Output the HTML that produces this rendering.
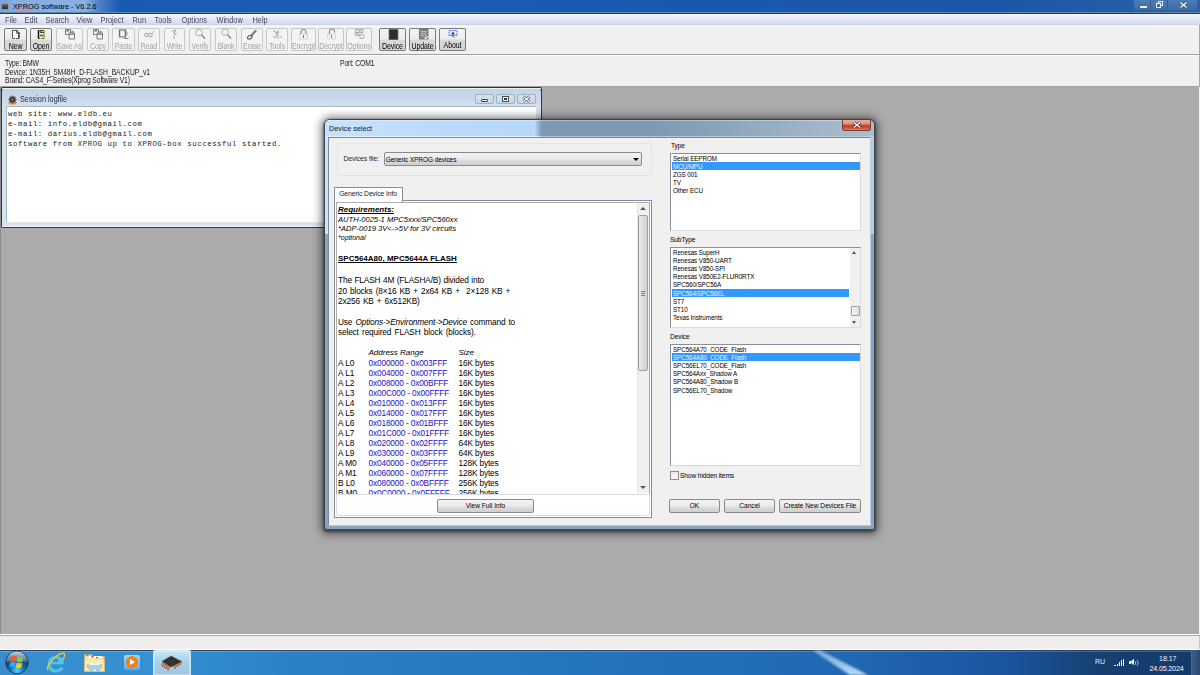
<!DOCTYPE html>
<html><head><meta charset="utf-8">
<style>
*{box-sizing:border-box;margin:0;padding:0}
html,body{width:1200px;height:675px;overflow:hidden;background:#ababab;font-family:"Liberation Sans",sans-serif;position:relative}
.a{position:absolute}
.t{position:absolute;white-space:nowrap;line-height:1}
#title{left:0;top:0;width:1200px;height:14px;background:linear-gradient(90deg,#3f6fb8 0,#1b5ab2 120px,#1b5cb4 400px,#1a58b0 700px,#1c56a8 1000px,#2a62a8 1200px)}
#menubar{left:0;top:14px;width:1200px;height:11px;background:linear-gradient(#f7f9fd 0,#eef1fa 2px,#dfe5f3 6px,#d7def0 9px,#cbd3e6 11px)}
#toolbar{left:0;top:25px;width:1200px;height:62px;background:#f0f0f0}
#status{left:0;top:634px;width:1200px;height:15px;background:#f0eeec;border-top:1px solid #a0a0a0}
#taskbar{left:0;top:650px;width:1200px;height:25px;background:linear-gradient(90deg,#3a8ccc 0,#3592d4 150px,#2c80c4 300px,#2474bd 600px,#2068b3 850px,#1b55a0 1000px,#163f72 1100px,#133a6a 1200px)}
.mi{font-size:7.4px;color:#4a4560;top:16.8px;transform:scaleY(1.2);transform-origin:0 6.3px}
.tb{position:absolute;top:28px;height:23px;border:1px solid #c9c9c9;border-radius:2px;background:#f3f3f3}
.tb.on{border-color:#7a7a7a;background:linear-gradient(#f4f4f4 0,#ececec 10px,#dadada 11px,#d4d4d4 100%)}
.tb .l{position:absolute;left:0;right:0;top:14px;text-align:center;font-size:7px;line-height:1;transform:scaleY(1.2);transform-origin:0 5.9px;color:#a2a2a2;white-space:nowrap;letter-spacing:-0.1px}
.tb.on .l{color:#000}
.tb svg{position:absolute;left:50%;top:1px;margin-left:-6px}
.inf{font-size:6.8px;color:#1a1a1a;letter-spacing:-0.15px;transform:scaleY(1.2);transform-origin:0 5.8px}
.mono{font-family:"Liberation Mono",monospace;font-size:7.3px;letter-spacing:0.6px;color:#1a1a1a}
.ds{font-size:6.6px;color:#000;letter-spacing:-0.1px}
.rt{font-size:8px;color:#000}
.lb{position:absolute;background:#fff;border:1px solid #8a8e96;border-right-color:#dcdcdc;border-bottom-color:#dcdcdc}
.li{position:absolute;left:1px;right:0;height:8.4px;font-size:6.3px;line-height:9px;padding-left:1px;white-space:nowrap;color:#000;letter-spacing:-0.1px}
.li.sel{background:#3399ff;color:#e8f2ff}
.btn{position:absolute;height:14px;border:1px solid #8a8a8a;border-radius:2px;background:linear-gradient(#f3f3f3 0,#ebebeb 6px,#dddddd 7px,#cfcfcf 100%);font-size:6.6px;line-height:12px;text-align:center;color:#000;white-space:nowrap}
.row .c1,.row .c2,.row .c3{position:absolute;white-space:nowrap;line-height:1;font-size:8px}

</style></head><body>
<div id="title" class="a"></div>
<div class="a" style="left:0;top:12px;width:1200px;height:1px;background:#5b86c4"></div>
<div class="a" style="left:0;top:13px;width:1200px;height:1px;background:#27375a"></div>
<div class="a" style="left:0;top:0;width:125px;height:12px;background:linear-gradient(90deg,rgba(140,175,225,.8) 0,rgba(150,185,230,.85) 15px,rgba(155,190,232,.85) 85px,rgba(120,160,215,.5) 100px,rgba(40,90,170,0) 120px);filter:blur(.6px)"></div><div class="a" style="left:14px;top:8px;width:20px;height:4px;background:rgba(240,120,120,.45);filter:blur(1.2px);border-radius:50%"></div>
<div class="a" style="left:1px;top:3px;width:8px;height:7px;background:linear-gradient(#6a6a6a,#2a2a2a);border:1px solid #9a9a9a;border-radius:1px"></div>
<div class="t" style="left:13px;top:3.1px;font-size:7.3px;color:#000">XPROG software - V6.2.6</div>
<div class="a" style="left:1133px;top:0;width:65px;height:11px;border:1px solid #3a5f8e;border-top:0;border-radius:0 0 3px 3px;background:linear-gradient(#4d7cb4,#3d6ba5)"></div>
<div class="a" style="left:1150px;top:0;width:1px;height:11px;background:#3a5f8e"></div>
<div class="a" style="left:1167px;top:0;width:1px;height:11px;background:#3a5f8e"></div>
<div class="a" style="left:1140px;top:5.5px;width:7px;height:2px;background:#eee;box-shadow:0 0 1px #123"></div>
<div class="a" style="left:1158px;top:1px;width:5px;height:5px;border:1px solid #eee"></div>
<div class="a" style="left:1156px;top:3px;width:5px;height:5px;border:1.5px solid #fff;background:#3d6ba5"></div>
<svg class="a" style="left:1179px;top:1px" width="9" height="8" viewBox="0 0 9 8"><path d="M1.5 1.5l6 5M7.5 1.5l-6 5" stroke="#3a4a60" stroke-width="2.6"/><path d="M1.5 1.5l6 5M7.5 1.5l-6 5" stroke="#f4f4f4" stroke-width="1.6"/></svg>
<div id="menubar" class="a"></div>
<div class="t mi" style="left:5px">File</div>
<div class="t mi" style="left:24.5px">Edit</div>
<div class="t mi" style="left:45.5px">Search</div>
<div class="t mi" style="left:76.5px">View</div>
<div class="t mi" style="left:100.5px">Project</div>
<div class="t mi" style="left:132.5px">Run</div>
<div class="t mi" style="left:154.5px">Tools</div>
<div class="t mi" style="left:181.5px">Options</div>
<div class="t mi" style="left:216.5px">Window</div>
<div class="t mi" style="left:252.5px">Help</div>
<div class="a" style="left:0;top:25px;width:1200px;height:1px;background:#c5c9d2"></div>
<div class="a" style="left:1199px;top:25px;width:1px;height:62px;background:#a8a8a8;z-index:2"></div><div class="a" style="left:0;top:26px;width:1198px;height:1px;background:#fafafa;z-index:1"></div>
<div id="toolbar" class="a"></div>
<div class="tb on" style="left:4px;width:23px"><div class="l">New</div></div>
<div class="tb on" style="left:30px;width:22px"><div class="l">Open</div></div>
<div class="tb" style="left:56px;width:27px"><div class="l">Save As</div></div>
<div class="tb" style="left:87px;width:22px"><div class="l">Copy</div></div>
<div class="tb" style="left:112px;width:23px"><div class="l">Paste</div></div>
<div class="tb" style="left:138px;width:22px"><div class="l">Read</div></div>
<div class="tb" style="left:164px;width:21px"><div class="l">Write</div></div>
<div class="tb" style="left:189px;width:22px"><div class="l">Verify</div></div>
<div class="tb" style="left:215px;width:22px"><div class="l">Blank</div></div>
<div class="tb" style="left:241px;width:22px"><div class="l">Erase</div></div>
<div class="tb" style="left:266px;width:22px"><div class="l">Tools</div></div>
<div class="tb" style="left:291px;width:25px"><div class="l">Encrypt</div></div>
<div class="tb" style="left:318px;width:26px"><div class="l">Decrypt</div></div>
<div class="tb" style="left:346px;width:26px"><div class="l">Options</div></div>
<div class="tb on" style="left:379px;width:27px"><div class="l">Device</div></div>
<div class="tb on" style="left:409px;width:27px"><div class="l">Update</div></div>
<div class="tb on" style="left:439px;width:27px"><div class="l" style="top:13px">About</div></div>
<svg class="a" style="left:0;top:28px" width="480" height="14" viewBox="0 0 480 14" shape-rendering="geometricPrecision"><path d="M12.5 2.5h4.5l2 2v6h-6.5z" fill="#fff" stroke="#555" stroke-width="1"/><path d="M17 2.5v2.5h2.3" fill="none" stroke="#000" stroke-width="1.1"/><path d="M19 5v5.3" stroke="#000" stroke-width="1"/><path d="M17.5 4.5l3-3" stroke="#f0f020" stroke-width=".9"/><rect x="10.9" y="0.9" width="1.2" height="1.2" fill="#f0f020"/><rect x="14.9" y="0.9" width="1.2" height="1.2" fill="#f0f020"/><rect x="10.9" y="5.9" width="1.2" height="1.2" fill="#f0f020"/><rect x="19.2" y="5.9" width="1.2" height="1.2" fill="#f0f020"/><rect x="10.9" y="9.699999999999998" width="1.2" height="1.2" fill="#f0f020"/><rect x="14.9" y="10.000000000000002" width="1.2" height="1.2" fill="#f0f020"/><rect x="18.9" y="9.699999999999998" width="1.2" height="1.2" fill="#f0f020"/><path d="M38.5 2.5h5.5v8h-5.5z" fill="#fff" stroke="#555" stroke-width="1"/><path d="M38.5 2.5v8" stroke="#000" stroke-width="1.5"/><path d="M41 2.5v2h2l1-2" fill="none" stroke="#000" stroke-width="1.1"/><path d="M40 6.5h3v2h-3z" fill="#666"/><path d="M42.5 4.5l3-3" stroke="#f0f020" stroke-width=".9"/><rect x="36.9" y="0.9" width="1.2" height="1.2" fill="#f0f020"/><rect x="40.4" y="0.9" width="1.2" height="1.2" fill="#f0f020"/><rect x="36.9" y="5.9" width="1.2" height="1.2" fill="#f0f020"/><rect x="44.4" y="5.9" width="1.2" height="1.2" fill="#f0f020"/><rect x="36.9" y="9.699999999999998" width="1.2" height="1.2" fill="#f0f020"/><rect x="40.4" y="10.000000000000002" width="1.2" height="1.2" fill="#f0f020"/><rect x="44.4" y="9.699999999999998" width="1.2" height="1.2" fill="#f0f020"/><path d="M65.5 1.5h5v5h-5z" fill="#f4f4f4" stroke="#7a7a7a" stroke-width="1"/><path d="M66.5 1.8000000000000007h2.5v2h-2.5z" fill="#8a8a8a"/><path d="M69 5h5.5v6h-5.5z" fill="#f4f4f4" stroke="#7a7a7a" stroke-width="1"/><path d="M65.5 6.5h9" stroke="#8a8a8a" stroke-width="1"/><circle cx="72.5" cy="4" r="1.3" fill="#8a8a8a"/><path d="M93.5 1.5h5v5h-5z" fill="#f4f4f4" stroke="#7a7a7a" stroke-width="1"/><path d="M94.5 1.8000000000000007h2.5v2h-2.5z" fill="#8a8a8a"/><path d="M97 5h5.5v6h-5.5z" fill="#f4f4f4" stroke="#7a7a7a" stroke-width="1"/><path d="M93.5 6.5h9" stroke="#8a8a8a" stroke-width="1"/><circle cx="100.5" cy="4" r="1.3" fill="#8a8a8a"/><path d="M119.5 2h6v7h-6z" fill="#e0e0e0" stroke="#6a6a6a" stroke-width="1.2"/><path d="M121 3.5h3v4h-3z" fill="#fff"/><path d="M125.5 3l2 2.5-2 2.5M124 10.5h4l1-1" fill="none" stroke="#777" stroke-width=".9"/><circle cx="146.5" cy="7" r="1.8" fill="none" stroke="#999" stroke-width=".9"/><circle cx="150.5" cy="7" r="1.8" fill="none" stroke="#999" stroke-width=".9"/><path d="M148.3 7h.5M152 5.5l2.5-3" stroke="#aaa" stroke-width=".8" fill="none"/><path d="M172 3.5l4-1.5-2.5 3 3 1-3 2 1 3" fill="none" stroke="#a0a0a0" stroke-width=".9"/><circle cx="199" cy="4.5" r="3.3" fill="none" stroke="#a8a8a8" stroke-width=".9"/><path d="M201.5 7.0l3.5 3.8" stroke="#8a8a8a" stroke-width="1.3"/><circle cx="225" cy="4.200000000000003" r="3.3" fill="none" stroke="#a8a8a8" stroke-width=".9"/><path d="M227.5 6.700000000000003l3.5 3.8" stroke="#8a8a8a" stroke-width="1.3"/><path d="M251 8l5-5.5" stroke="#6a6a6a" stroke-width="2"/><path d="M252 7l4.5-5" stroke="#aaa" stroke-width=".6"/><path d="M247.5 10.5q0-3 2.5-3t2 1.5-2 2-2.5-.5" fill="none" stroke="#555" stroke-width="1.1"/><path d="M273 2l3 3 3-1M275 3l2 4-2 3M278 2v9M273 8l2 2M280 8l2 2" fill="none" stroke="#a0a0a0" stroke-width=".9"/><path d="M301 6v-2a2.5 2.5 0 0 1 5 0v2" fill="none" stroke="#8a8aa8" stroke-width="1.2"/><path d="M299.5 6h8v5h-8z" fill="#f6f2e4" stroke="#c8c8c8" stroke-width=".6"/><path d="M303 7.5h1v2h-1z" fill="#444"/><path d="M329.5 6v-2.5a2.5 2.5 0 0 1 5 0v1" fill="none" stroke="#8a8aa8" stroke-width="1.2"/><path d="M327.5 6h8v5h-8z" fill="#f6f2e4" stroke="#c8c8c8" stroke-width=".6"/><path d="M331 7.5h1v2h-1z" fill="#444"/><path d="M355.5 1.5h3.5v3h-3.5zM360 1.5h3v3h-3zM355.5 5h3.5v2.5h-3.5z" fill="#e8e8e8" stroke="#999" stroke-width=".8"/><circle cx="362" cy="8.5" r="2.2" fill="none" stroke="#a0a0a0" stroke-width=".9"/><path d="M359.5 10.5l1-1" stroke="#aaa" stroke-width=".8"/><path d="M389 1.5h9v10h-9z" fill="#2c2c2c" stroke="#5a5a5a" stroke-width=".8"/><path d="M388.6 2.5v8M398.4 2.5v8" stroke="#a8c0d8" stroke-width=".8"/><path d="M419.5 1.5h8.5v9.5h-8.5z" fill="#8c8c8c" stroke="#5a5a5a" stroke-width=".8"/><path d="M420.5 3.5h6.5M420.5 5.5h6.5M420.5 7.5h6.5" stroke="#c4c4c4" stroke-width=".7"/><path d="M424.5 9.5l1.3 1.3 2.5-2.8" stroke="#fff" stroke-width="1.1" fill="none"/><path d="M449 2.5h8v5h-8z" fill="none" stroke="#2a6ae0" stroke-width="1" stroke-dasharray="1.6 1"/><path d="M453 3.5l-2 3h4z" fill="#1840b0"/><path d="M452.5 7.5l1.5 2" stroke="#1840b0" stroke-width="1"/></svg>
<div class="a" style="left:0;top:54px;width:1199px;height:1px;background:#a0a0a0"></div>
<div class="a" style="left:0;top:55px;width:1199px;height:1px;background:#fff"></div>
<div class="t inf" style="left:5px;top:60.6px">Type: BMW</div>
<div class="t inf" style="left:5px;top:69.5px;letter-spacing:-0.05px">Device: 1N35H_5M48H_D-FLASH_BACKUP_v1</div>
<div class="t inf" style="left:5px;top:77.9px">Brand: CAS4_F-Series(Xprog Software V1)</div>
<div class="t inf" style="left:340px;top:60.6px">Port: COM1</div>
<div class="a" style="left:0;top:87px;width:1200px;height:547px;background:#ababab"></div>
<div class="a" style="left:0;top:87px;width:1px;height:547px;background:#8a8a8a"></div>
<div class="a" style="left:0;top:86px;width:1200px;height:1px;background:#a2a2a2"></div>
<div class="a" style="left:1px;top:87px;width:541px;height:141px;background:#353535;border-radius:2px"></div>
<div class="a" style="left:2px;top:88px;width:539px;height:139px;border-radius:4px 4px 0 0;background:linear-gradient(#c2d3e6 0,#c9d8ea 10px,#d3e1ef 18px,#d7e4f1 100%)"></div>
<div class="a" style="left:2px;top:88px;width:539px;height:1px;background:#e8f0f8"></div>
<div class="a" style="left:2px;top:226px;width:539px;height:1px;background:#f4f8fc"></div>
<svg class="a" style="left:7px;top:95px" width="11" height="10" viewBox="0 0 11 10"><path d="M1 8l1.5-2 1 2 1-2.5 1 2.5 1-2.5 1 2.5 1-2 1.5 2-2 1.5h-5z" fill="#f09020"/><circle cx="5.5" cy="4.5" r="3" fill="#3a3a3a"/><path d="M5.5 0.5v8M1.5 4.5h8M2.7 1.7l5.6 5.6M8.3 1.7l-5.6 5.6" stroke="#444" stroke-width="1.3"/><circle cx="5.5" cy="4.5" r="1" fill="#777"/></svg>
<div class="t" style="left:20px;top:96px;font-size:7.3px;color:#1e2a3a;transform:scaleY(1.2);transform-origin:0 6.2px">Session logfile</div>
<div class="a" style="left:475px;top:94px;width:19px;height:10px;border:1px solid #9fb0c6;border-radius:2px;background:linear-gradient(#d6e2ee,#c8d6e6)"></div>
<div class="a" style="left:496px;top:94px;width:19px;height:10px;border:1px solid #9fb0c6;border-radius:2px;background:linear-gradient(#d6e2ee,#c8d6e6)"></div>
<div class="a" style="left:517px;top:94px;width:19px;height:10px;border:1px solid #9fb0c6;border-radius:2px;background:linear-gradient(#d6e2ee,#c8d6e6)"></div>
<div class="a" style="left:481px;top:99px;width:7px;height:3px;border:1px solid #444a55;background:#fff;border-radius:1px"></div>
<div class="a" style="left:502px;top:96px;width:7px;height:6px;border:1px solid #444a55;background:#fff"></div>
<div class="a" style="left:504px;top:98px;width:3px;height:2px;background:#333"></div>
<svg class="a" style="left:522px;top:95px" width="9" height="8" viewBox="0 0 9 8"><path d="M1.5 1.5l6 5M7.5 1.5l-6 5" stroke="#404858" stroke-width="2.6"/><path d="M1.5 1.5l6 5M7.5 1.5l-6 5" stroke="#f8f8f8" stroke-width="1.4"/></svg>
<div class="a" style="left:6px;top:106px;width:531px;height:117px;background:#fff;border:1px solid #a9b6c5;border-right-color:#e0e6ee;border-bottom-color:#e0e6ee"></div>
<div class="t mono" style="left:8px;top:110.8px">web site: www.eldb.eu</div>
<div class="t mono" style="left:8px;top:120.8px">e-mail: info.eldb@gmail.com</div>
<div class="t mono" style="left:8px;top:130.8px">e-mail: darius.eldb@gmail.com</div>
<div class="t mono" style="left:8px;top:140.8px">software from XPROG up to XPROG-box successful started.</div>
<div class="a" style="left:324px;top:119px;width:551px;height:411px;border-radius:6px 6px 3px 3px;box-shadow:0 1px 2px 1px rgba(0,0,0,.35),0 1px 9px 3px rgba(0,0,0,.5);background:#88a4c0;overflow:hidden;border:1px solid #3a4658">
<div class="a" style="left:0;top:0;width:216px;height:114px;background:#cfe4f8"></div>
<div class="a" style="left:0;top:0;width:549px;height:17px;background:linear-gradient(90deg,#c8e2fb 0,#b9dafb 120px,#b6d8fb 210px,#8fb0d0 214px,#7e98b1 217px,#7f99b2 330px,#acbfd0 100%)"></div>
<div class="a" style="left:0;top:0;width:549px;height:1px;background:rgba(255,255,255,.35)"></div>
<div class="a" style="left:0;top:16px;width:549px;height:1px;background:linear-gradient(90deg,#e6f2fc 0,#e6f2fc 212px,#aebfd0 217px,#c0cfdc 100%)"></div>
<div class="a" style="left:545px;top:17px;width:4px;height:393px;background:linear-gradient(90deg,#c4d6e8 0,#c4d6e8 1px,#8aa6c2 1px)"></div><div class="a" style="left:545px;top:17px;width:4px;height:97px;background:linear-gradient(90deg,#e0ecf8 0,#e0ecf8 1px,#b8cde2 1px)"></div>
<div class="a" style="left:4px;top:405px;width:542px;height:5px;background:linear-gradient(#c4d6e8 0,#c4d6e8 1px,#88a4c0 1px)"></div>
</div>
<div class="t" style="left:329px;top:124.5px;font-size:7.25px;color:#0e1a2a">Device select</div>
<!-- close button -->
<div class="a" style="left:842px;top:120px;width:29px;height:11px;border:1px solid #7a3a30;border-top:0;border-radius:0 0 3px 3px;background:linear-gradient(#e6b0a4 0,#dc907e 40%,#c2442c 52%,#c84e34 80%,#de8a70 100%)"></div>
<svg class="a" style="left:852px;top:121px" width="10" height="8" viewBox="0 0 10 8"><path d="M2 1.5l6 5M8 1.5l-6 5" stroke="#4a1a14" stroke-width="2.8"/><path d="M2 1.5l6 5M8 1.5l-6 5" stroke="#fafafa" stroke-width="1.6"/></svg>
<!-- content area -->
<div class="a" style="left:328px;top:137px;width:543px;height:389px;background:#f0f0f0;border:1px solid #7a8898;border-right-color:#c0ccd8;border-bottom-color:#c0ccd8"></div>
<!-- group box -->
<div class="a" style="left:337px;top:143px;width:315px;height:33px;border:1px solid #dde5ec;border-radius:3px"></div>
<div class="t ds" style="left:343.5px;top:155.8px;font-size:6.83px;color:#2a2a3a">Devices file:</div>
<div class="a" style="left:384px;top:152px;width:258px;height:14px;border:1px solid #8a8a8a;border-radius:2px;background:linear-gradient(#f2f2f2 0,#ebebeb 6px,#dddddd 7px,#cfcfcf 100%)"></div>
<div class="t ds" style="left:385.7px;top:156.7px;font-size:6.58px">Generic XPROG devices</div>
<div class="a" style="left:633px;top:158px;width:0;height:0;border-left:3px solid transparent;border-right:3px solid transparent;border-top:3px solid #000"></div>
<!-- tab -->
<div class="a" style="left:334px;top:200px;width:318px;height:318px;border:1px solid #898c95;background:#fff"></div>
<div class="a" style="left:334px;top:187px;width:69px;height:15px;border:1px solid #898c95;border-bottom:0;background:#fff"></div>
<div class="t ds" style="left:339.2px;top:191px;font-size:6.8px;color:#1a1a2a">Generic Device Info</div>
<!-- rich text box -->
<div class="a" style="left:336px;top:202px;width:314px;height:292px;border:1px solid #abadb3;border-bottom:0;background:#fff;overflow:hidden" id="rt">
</div>






<!--RT--><div class="a" style="left:337px;top:203px;width:300px;height:291px;overflow:hidden">
<div class="t" style="left:1px;top:1.8000000000000114px;font:italic bold 8px 'Liberation Sans';text-decoration:underline;text-decoration-skip-ink:none;color:#000">Requirements:</div>
<div class="t" style="left:1px;top:11.5px;font:italic 7.6px 'Liberation Sans';color:#000">AUTH-0025-1 MPC5xxx/SPC560xx</div>
<div class="t" style="left:1px;top:21.19999999999999px;font:italic 7.59px 'Liberation Sans';color:#000">*ADP-0019 3V&lt;-&gt;5V for 3V circuits</div>
<div class="t" style="left:1px;top:31px;font:italic 7.08px 'Liberation Sans';color:#000">*optional</div>
<div class="t" style="left:1px;top:51.400000000000006px;font:bold 8px 'Liberation Sans';text-decoration:underline;text-decoration-skip-ink:none;color:#000">SPC564A80, MPC5644A FLASH</div>
<div class="t" style="left:1px;top:72px;font:8.3px 'Liberation Sans';letter-spacing:-0.15px;color:#000;word-spacing:0.4px">The FLASH 4M (FLASHA/B) divided into</div>
<div class="t" style="left:1px;top:82.60000000000002px;font:8.3px 'Liberation Sans';letter-spacing:-0.15px;color:#000;word-spacing:0.9px">20 blocks (8×16 KB + 2x64 KB +&nbsp; 2×128 KB +</div>
<div class="t" style="left:1px;top:92.69999999999999px;font:8.3px 'Liberation Sans';letter-spacing:-0.15px;color:#000;word-spacing:0.9px">2x256 KB + 6x512KB)</div>
<div class="t" style="left:1px;top:113.69999999999999px;font:8.3px 'Liberation Sans';letter-spacing:-0.15px;color:#000;word-spacing:.9px">Use <i>Options-&gt;Environment-&gt;Device</i> command to</div>
<div class="t" style="left:1px;top:123.69999999999999px;font:8.3px 'Liberation Sans';letter-spacing:-0.15px;color:#000;word-spacing:1.1px">select required FLASH block (blocks).</div>
<div class="t" style="left:31.5px;top:145.39999999999998px;font:italic 8px 'Liberation Sans';color:#000">Address Range</div>
<div class="t" style="left:121.5px;top:145.39999999999998px;font:italic 8px 'Liberation Sans';color:#000">Size</div>
<div class="t" style="left:1px;top:155.39999999999998px;font:8.3px 'Liberation Sans';letter-spacing:-0.1px;color:#000">A L0</div>
<div class="t" style="left:31.5px;top:155.39999999999998px;font:8.3px 'Liberation Sans';letter-spacing:-0.15px;color:#1c12c4">0x000000 - 0x003FFF</div>
<div class="t" style="left:121.5px;top:155.39999999999998px;font:8.3px 'Liberation Sans';letter-spacing:-0.15px;color:#000">16K bytes</div>
<div class="t" style="left:1px;top:165.39999999999998px;font:8.3px 'Liberation Sans';letter-spacing:-0.1px;color:#000">A L1</div>
<div class="t" style="left:31.5px;top:165.39999999999998px;font:8.3px 'Liberation Sans';letter-spacing:-0.15px;color:#1c12c4">0x004000 - 0x007FFF</div>
<div class="t" style="left:121.5px;top:165.39999999999998px;font:8.3px 'Liberation Sans';letter-spacing:-0.15px;color:#000">16K bytes</div>
<div class="t" style="left:1px;top:175.39999999999998px;font:8.3px 'Liberation Sans';letter-spacing:-0.1px;color:#000">A L2</div>
<div class="t" style="left:31.5px;top:175.39999999999998px;font:8.3px 'Liberation Sans';letter-spacing:-0.15px;color:#1c12c4">0x008000 - 0x00BFFF</div>
<div class="t" style="left:121.5px;top:175.39999999999998px;font:8.3px 'Liberation Sans';letter-spacing:-0.15px;color:#000">16K bytes</div>
<div class="t" style="left:1px;top:185.39999999999998px;font:8.3px 'Liberation Sans';letter-spacing:-0.1px;color:#000">A L3</div>
<div class="t" style="left:31.5px;top:185.39999999999998px;font:8.3px 'Liberation Sans';letter-spacing:-0.15px;color:#1c12c4">0x00C000 - 0x00FFFF</div>
<div class="t" style="left:121.5px;top:185.39999999999998px;font:8.3px 'Liberation Sans';letter-spacing:-0.15px;color:#000">16K bytes</div>
<div class="t" style="left:1px;top:195.39999999999998px;font:8.3px 'Liberation Sans';letter-spacing:-0.1px;color:#000">A L4</div>
<div class="t" style="left:31.5px;top:195.39999999999998px;font:8.3px 'Liberation Sans';letter-spacing:-0.15px;color:#1c12c4">0x010000 - 0x013FFF</div>
<div class="t" style="left:121.5px;top:195.39999999999998px;font:8.3px 'Liberation Sans';letter-spacing:-0.15px;color:#000">16K bytes</div>
<div class="t" style="left:1px;top:205.39999999999998px;font:8.3px 'Liberation Sans';letter-spacing:-0.1px;color:#000">A L5</div>
<div class="t" style="left:31.5px;top:205.39999999999998px;font:8.3px 'Liberation Sans';letter-spacing:-0.15px;color:#1c12c4">0x014000 - 0x017FFF</div>
<div class="t" style="left:121.5px;top:205.39999999999998px;font:8.3px 'Liberation Sans';letter-spacing:-0.15px;color:#000">16K bytes</div>
<div class="t" style="left:1px;top:215.39999999999998px;font:8.3px 'Liberation Sans';letter-spacing:-0.1px;color:#000">A L6</div>
<div class="t" style="left:31.5px;top:215.39999999999998px;font:8.3px 'Liberation Sans';letter-spacing:-0.15px;color:#1c12c4">0x018000 - 0x01BFFF</div>
<div class="t" style="left:121.5px;top:215.39999999999998px;font:8.3px 'Liberation Sans';letter-spacing:-0.15px;color:#000">16K bytes</div>
<div class="t" style="left:1px;top:225.39999999999998px;font:8.3px 'Liberation Sans';letter-spacing:-0.1px;color:#000">A L7</div>
<div class="t" style="left:31.5px;top:225.39999999999998px;font:8.3px 'Liberation Sans';letter-spacing:-0.15px;color:#1c12c4">0x01C000 - 0x01FFFF</div>
<div class="t" style="left:121.5px;top:225.39999999999998px;font:8.3px 'Liberation Sans';letter-spacing:-0.15px;color:#000">16K bytes</div>
<div class="t" style="left:1px;top:235.39999999999998px;font:8.3px 'Liberation Sans';letter-spacing:-0.1px;color:#000">A L8</div>
<div class="t" style="left:31.5px;top:235.39999999999998px;font:8.3px 'Liberation Sans';letter-spacing:-0.15px;color:#1c12c4">0x020000 - 0x02FFFF</div>
<div class="t" style="left:121.5px;top:235.39999999999998px;font:8.3px 'Liberation Sans';letter-spacing:-0.15px;color:#000">64K bytes</div>
<div class="t" style="left:1px;top:245.39999999999998px;font:8.3px 'Liberation Sans';letter-spacing:-0.1px;color:#000">A L9</div>
<div class="t" style="left:31.5px;top:245.39999999999998px;font:8.3px 'Liberation Sans';letter-spacing:-0.15px;color:#1c12c4">0x030000 - 0x03FFFF</div>
<div class="t" style="left:121.5px;top:245.39999999999998px;font:8.3px 'Liberation Sans';letter-spacing:-0.15px;color:#000">64K bytes</div>
<div class="t" style="left:1px;top:255.39999999999998px;font:8.3px 'Liberation Sans';letter-spacing:-0.1px;color:#000">A M0</div>
<div class="t" style="left:31.5px;top:255.39999999999998px;font:8.3px 'Liberation Sans';letter-spacing:-0.15px;color:#1c12c4">0x040000 - 0x05FFFF</div>
<div class="t" style="left:121.5px;top:255.39999999999998px;font:8.3px 'Liberation Sans';letter-spacing:-0.15px;color:#000">128K bytes</div>
<div class="t" style="left:1px;top:265.4px;font:8.3px 'Liberation Sans';letter-spacing:-0.1px;color:#000">A M1</div>
<div class="t" style="left:31.5px;top:265.4px;font:8.3px 'Liberation Sans';letter-spacing:-0.15px;color:#1c12c4">0x060000 - 0x07FFFF</div>
<div class="t" style="left:121.5px;top:265.4px;font:8.3px 'Liberation Sans';letter-spacing:-0.15px;color:#000">128K bytes</div>
<div class="t" style="left:1px;top:275.4px;font:8.3px 'Liberation Sans';letter-spacing:-0.1px;color:#000">B L0</div>
<div class="t" style="left:31.5px;top:275.4px;font:8.3px 'Liberation Sans';letter-spacing:-0.15px;color:#1c12c4">0x080000 - 0x0BFFFF</div>
<div class="t" style="left:121.5px;top:275.4px;font:8.3px 'Liberation Sans';letter-spacing:-0.15px;color:#000">256K bytes</div>
<div class="t" style="left:1px;top:285.4px;font:8.3px 'Liberation Sans';letter-spacing:-0.1px;color:#000">B M0</div>
<div class="t" style="left:31.5px;top:285.4px;font:8.3px 'Liberation Sans';letter-spacing:-0.15px;color:#1c12c4">0x0C0000 - 0x0FFFFF</div>
<div class="t" style="left:121.5px;top:285.4px;font:8.3px 'Liberation Sans';letter-spacing:-0.15px;color:#000">256K bytes</div>
</div>
<!--/RT-->
<!-- scroll bar -->
<div class="a" style="left:637px;top:203px;width:12px;height:290px;background:#f0f0f0;border-left:1px solid #e6e6e6"></div>
<div class="a" style="left:640px;top:207px;width:0;height:0;border-left:3px solid transparent;border-right:3px solid transparent;border-bottom:3px solid #555"></div>
<div class="a" style="left:638px;top:215px;width:10px;height:156px;border:1px solid #a0a0a0;border-radius:2px;background:linear-gradient(90deg,#eaeaea,#dcdcdc 50%,#d0d0d0)"></div>
<div class="a" style="left:641px;top:291px;width:4px;height:5px;background:repeating-linear-gradient(#808080 0,#808080 1px,transparent 1px,transparent 2px)"></div>
<div class="a" style="left:640px;top:486px;width:0;height:0;border-left:3px solid transparent;border-right:3px solid transparent;border-top:3px solid #555"></div>
<!-- bottom panel -->
<div class="a" style="left:336px;top:494px;width:314px;height:22px;border:1px solid #d5dde6;border-radius:0 0 3px 3px;background:#fff"></div>
<div class="btn" style="left:437px;top:499px;width:97px">View Full Info</div>
<!-- right side -->
<div class="t ds" style="left:671px;top:142.5px">Type</div>
<div class="lb" style="left:670px;top:153px;width:191px;height:78px">
 <div class="li" style="top:0.0px">Serial EEPROM</div>
 <div class="li sel" style="top:8.1px">MCU/MPU</div>
 <div class="li" style="top:16.2px">ZGS 001</div>
 <div class="li" style="top:24.3px">TV</div>
 <div class="li" style="top:32.4px">Other ECU</div>
</div>
<div class="t ds" style="left:670px;top:236.5px">SubType</div>
<div class="lb" style="left:670px;top:247px;width:191px;height:81px">
 <div class="li" style="top:0.0px">Renesas SuperH</div>
 <div class="li" style="top:8.1px">Renesas V850-UART</div>
 <div class="li" style="top:16.2px">Renesas V850-SPI</div>
 <div class="li" style="top:24.3px">Renesas V850E2-FLUR0RTX</div>
 <div class="li" style="top:32.4px">SPC560/SPC56A</div>
 <div class="li sel" style="top:40.5px;right:11px">SPC564/SPC56EL</div>
 <div class="li" style="top:48.6px">ST7</div>
 <div class="li" style="top:56.7px">ST10</div>
 <div class="li" style="top:64.8px">Texas Instruments</div>
</div>
<div class="a" style="left:850px;top:248px;width:10px;height:79px;background:#f0f0f0"></div>
<div class="a" style="left:852px;top:251px;width:0;height:0;border-left:2.5px solid transparent;border-right:2.5px solid transparent;border-bottom:3px solid #555"></div>
<div class="a" style="left:851px;top:306px;width:9px;height:10px;border:1px solid #a0a0a0;border-radius:1px;background:linear-gradient(90deg,#f4f4f4,#dedede)"></div>
<div class="a" style="left:852px;top:321px;width:0;height:0;border-left:2.5px solid transparent;border-right:2.5px solid transparent;border-top:3px solid #555"></div>
<div class="t ds" style="left:670px;top:333.5px">Device</div>
<div class="lb" style="left:670px;top:344px;width:191px;height:122px">
 <div class="li" style="top:0.0px">SPC564A70_CODE_Flash</div>
 <div class="li sel" style="top:8.1px">SPC564A80_CODE_Flash</div>
 <div class="li" style="top:16.2px">SPC56EL70_CODE_Flash</div>
 <div class="li" style="top:24.3px">SPC564Axx_Shadow A</div>
 <div class="li" style="top:32.4px">SPC564A80_Shadow B</div>
 <div class="li" style="top:40.5px">SPC56EL70_Shadow</div>
</div>
<div class="a" style="left:670px;top:471px;width:9px;height:9px;border:1px solid #8f8f8f;background:linear-gradient(#e8e8e8,#fafafa)"></div>
<div class="t ds" style="left:680px;top:473px">Show hidden items</div>
<div class="btn" style="left:669px;top:499px;width:51px">OK</div>
<div class="btn" style="left:724px;top:499px;width:51px">Cancel</div>
<div class="btn" style="left:779px;top:499px;width:82px">Create New Devices File</div>
<div class="a" style="left:1199px;top:87px;width:1px;height:547px;background:#f4f4f4"></div>
<div class="a" style="left:0;top:634px;width:1200px;height:1px;background:#fdfdfd"></div>
<div class="a" style="left:0;top:635px;width:1200px;height:1px;background:#a8a8a8"></div>
<div class="a" style="left:0;top:636px;width:1200px;height:13px;background:#f0eeec"></div>
<div class="a" style="left:1199px;top:636px;width:1px;height:13px;background:#c8c8c8"></div>
<div class="a" style="left:0;top:649px;width:1200px;height:1px;background:#ffffff"></div>
<div id="taskbar" class="a"></div>
<div class="a" style="left:0;top:650px;width:1200px;height:1px;background:#2a4466"></div>
<div class="a" style="left:0;top:651px;width:1200px;height:1px;background:rgba(255,255,255,.2)"></div>
<div class="a" style="left:800px;top:650px;width:80px;height:25px;filter:blur(1px);overflow:visible"><div class="a" style="left:0;top:0;width:80px;height:25px;background:linear-gradient(rgba(190,225,255,.5),rgba(215,238,255,.85));clip-path:polygon(12px 0,20px 0,68px 25px,50px 25px)"></div></div>
<!-- start orb -->
<svg class="a" style="left:4px;top:650px" width="26" height="25" viewBox="0 0 26 25">
<defs><radialGradient id="og" cx="50%" cy="85%" r="60%"><stop offset="0" stop-color="#40e0ff"/><stop offset=".45" stop-color="#1a78b8"/><stop offset="1" stop-color="#0e3a6a"/></radialGradient>
<linearGradient id="gl" x1="0" y1="0" x2="0" y2="1"><stop offset="0" stop-color="#e8f0f8" stop-opacity=".85"/><stop offset="1" stop-color="#7a9cb8" stop-opacity=".5"/></linearGradient></defs>
<circle cx="13" cy="12.5" r="11.3" fill="url(#og)" stroke="#1a3a5a" stroke-width=".8"/>
<path d="M2.2 12.3A10.8 10.8 0 0 1 23.8 12.3Q13 9.5 2.2 12.3z" fill="url(#gl)"/>
<path d="M7.5 6.2q3-1.2 5.2.2l-.9 5q-2.4-1.3-5.2-.2z" fill="#f05a24"/>
<path d="M13.6 6.6q2.6 1.3 5.6.2l-.9 5q-3 1.1-5.6-.2z" fill="#8cc83c"/>
<path d="M6.5 12.1q2.8-1.1 5.2.2l-.9 5q-2.4-1.3-5.2-.2z" fill="#3aa8ec"/>
<path d="M12.6 12.5q2.6 1.3 5.6.2l-.9 5q-3 1.1-5.6-.2z" fill="#fcc418"/>
</svg>
<!-- IE -->
<svg class="a" style="left:45px;top:651px" width="21" height="23" viewBox="0 0 21 23">
<path transform="translate(10.5 13.5) scale(1.3) translate(-10.5 -13)" d="M15.6 13.2H7.2q.4 3.3 3.6 3.4 2 0 3.2-1.5h3.2q-1.8 4.4-6.6 4.4-6 0-6.3-6.6 0-6.6 6.3-6.8 6.6.2 6.8 6.6zM7.3 10.6h5.2q-.3-2.4-2.6-2.5-2.3.1-2.6 2.5z" fill="#4ec4f4" stroke="#2a90d0" stroke-width=".5"/>
<path d="M3 19.5Q1 16 8 8.5T19 2.5q2 1.5-1.5 6.5" fill="none" stroke="#f4c418" stroke-width="1.4"/>
</svg>
<!-- folder -->
<svg class="a" style="left:83px;top:653px" width="23" height="20" viewBox="0 0 23 20">
<path d="M1.5 1.5h7l1.5 2h11.5v15h-20z" fill="#e8cc78" stroke="#c8a850" stroke-width=".6"/>
<path d="M2.5 3h17v3h-17z" fill="#fff8e0"/>
<rect x="3.5" y="2" width="2" height="1.5" fill="#30b030"/><rect x="8.5" y="3" width="2" height="1.5" fill="#e03030"/><rect x="13" y="4" width="2" height="1.2" fill="#3080e0"/>
<path d="M1.5 6h20v12.5h-20z" fill="#fae9a8" stroke="#d8b860" stroke-width=".5"/>
<path d="M4.5 11.5h14v3h-2v3h-3v-2h-4v2h-3v-3h-2z" fill="#a8d4f0" stroke="#6aa8d8" stroke-width=".5"/>
<path d="M6 10h11v2H6z" fill="#e8f4fc"/>
</svg>
<!-- media player -->
<div class="a" style="left:124px;top:655px;width:16px;height:15px;background:linear-gradient(#a8d4f4,#68a8d8);border-radius:2px"></div>
<div class="a" style="left:126px;top:656px;width:12px;height:12px;border-radius:50%;background:#f08018"></div>
<div class="a" style="left:130px;top:659px;width:0;height:0;border-top:3px solid transparent;border-bottom:3px solid transparent;border-left:5px solid #fff"></div>
<!-- active app -->
<div class="a" style="left:153px;top:650px;width:38px;height:25px;border:1px solid #d0e4f4;border-bottom:0;border-radius:2px 2px 0 0;background:linear-gradient(#c8e4f6,#a8d2ee 45%,#98c6e6 100%);box-shadow:inset 0 0 0 1px rgba(255,255,255,.35)"></div>
<svg class="a" style="left:160px;top:653px" width="24" height="19" viewBox="0 0 24 19">
<g fill="#e89a20" stroke="#a02010" stroke-width=".5"><path d="M3 9.5l-1.5 2.5 1.2 2 1.5-2.5z"/><path d="M5.5 11l-1.2 3 1.2 2 1.5-3z"/><path d="M8 12.5l-1 3 1.2 2 1.3-3.3z"/><path d="M14 12.5l1 3.3 1.2-2-1-3z"/><path d="M16.5 11l1 3 1.3-2-1-3z"/><path d="M19 9.5l1 2.5 1.3-2-1-2.5z"/></g>
<path d="M2 8.5L11 3l10.5 5.5L11 14z" fill="#2a2a2a" stroke="#555" stroke-width=".6"/>
<path d="M4 8.5L11 4.5l8.5 4L11 12.5z" fill="#333"/>
</svg>
<!-- tray -->
<div class="t" style="left:1095px;top:658px;font-size:7px;color:#e8f0f8">RU</div>
<div class="a" style="left:1114px;top:665px;width:2px;height:1px;background:#fff"></div>
<div class="a" style="left:1116.5px;top:664px;width:1.5px;height:2px;background:#fff"></div>
<div class="a" style="left:1118.5px;top:662px;width:1.5px;height:4px;background:#fff"></div>
<div class="a" style="left:1120.5px;top:660px;width:1.5px;height:6px;background:#fff"></div>
<div class="a" style="left:1122.5px;top:659px;width:1.5px;height:7px;background:#fff"></div>
<div class="a" style="left:1129px;top:661px;width:2px;height:3px;background:#e8e8e8"></div>
<div class="a" style="left:1130px;top:659px;width:0;height:0;border-top:3.5px solid transparent;border-bottom:3.5px solid transparent;border-right:4px solid #e8e8e8;transform:scaleY(1.1)"></div>
<svg class="a" style="left:1134px;top:659px" width="6" height="8" viewBox="0 0 6 8"><path d="M1 2q1.5 2 0 4M3 1q2.5 3 0 6" fill="none" stroke="#b8c8d8" stroke-width=".8"/></svg>
<div class="t" style="left:1159px;top:655px;font-size:7px;color:#f4f8fc">18:17</div>
<div class="t" style="left:1149.5px;top:664.5px;font-size:7.2px;color:#f4f8fc;letter-spacing:-0.2px">24.05.2024</div>
<div class="a" style="left:1191px;top:650px;width:9px;height:25px;border-left:1px solid #4a6a90;background:linear-gradient(90deg,#3a5e88,#2a4a74)"></div>
</body></html>
